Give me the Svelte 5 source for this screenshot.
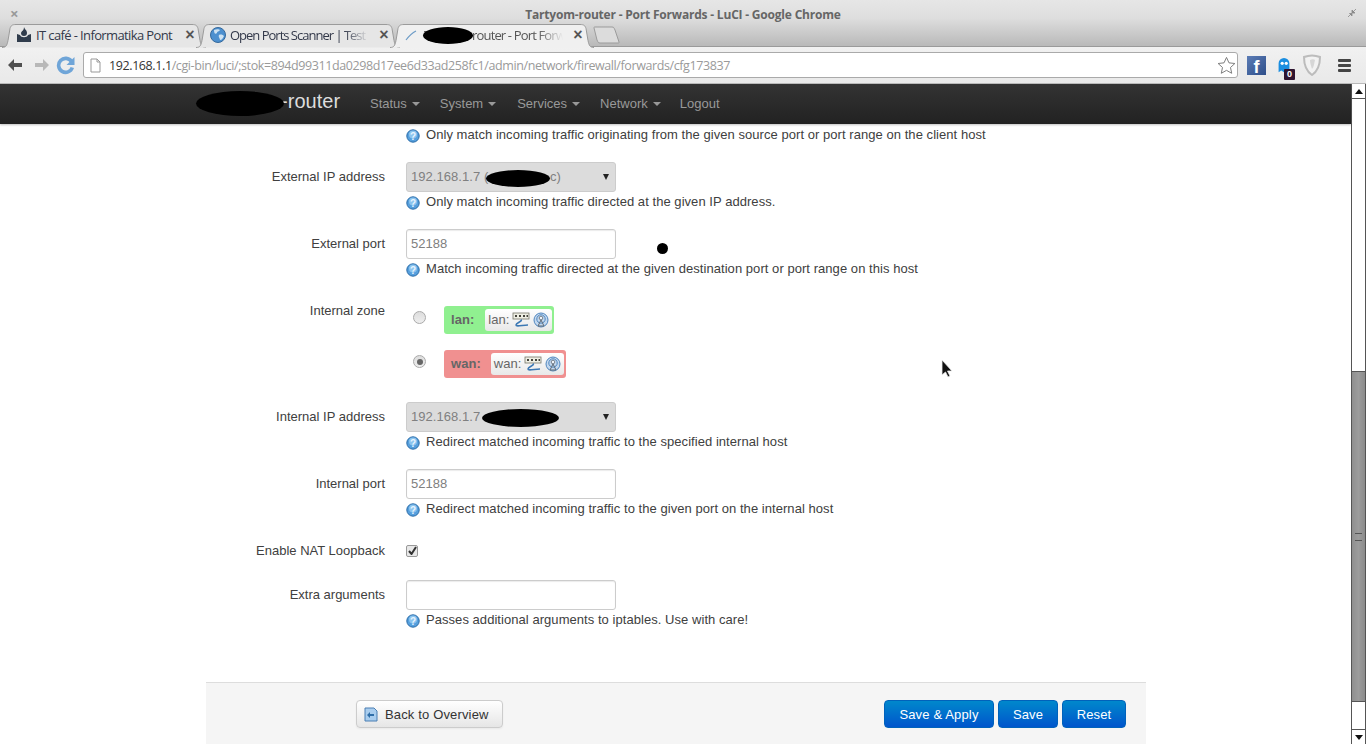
<script>
	const tabs = [
		{ title: 'IT café - Informatika Pont', icon: 'flame' },
		{ title: 'Open Ports Scanner | Test', icon: 'globe' },
		{ title: 'Tartyom-router - Port Forw', icon: 'luci', active: true }
	];
	const nav = ['Status', 'System', 'Services', 'Network'];
</script>

{#snippet help(text)}
	<div class="help">
		<svg class="qmark" width="14" height="14" viewBox="0 0 14 14">
			<circle cx="7" cy="7" r="6.2" fill="#559fdd" stroke="#2b6ca8" />
			<circle cx="7" cy="5.500" r="4" fill="#8cc4ee" />
			<text x="7" y="10.6" text-anchor="middle" class="qm">?</text>
		</svg>
		<span>{text}</span>
	</div>
{/snippet}

{#snippet netIcons()}
	<svg class="net" width="18" height="16" viewBox="0 0 18 16">
		<rect x="1" y="1" width="16" height="6" fill="#efefe4" stroke="#77776a" stroke-width="0.8" />
		<path d="M3 3h2v2H3zM7 3h2v2H7zM11 3h2v2h-2zM14.5 3h1.5v2h-1.5z" fill="#44443c" />
		<path d="M9 7.5c2 2-5 3-5 5.5 0 2 7 0 12 0" fill="none" stroke="#3c78b4" stroke-width="1.6" />
	</svg>
	<svg class="net" width="16" height="16" viewBox="0 0 16 16">
		<circle cx="8" cy="8" r="7" fill="#c3d8ee" stroke="#4f86bf" />
		<circle cx="8" cy="7" r="4.2" fill="none" stroke="#4f86bf" />
		<circle cx="8" cy="6" r="1.8" fill="#eef4fa" stroke="#5f6a75" stroke-width="0.8" />
		<path d="M8 8l-3 6h6z" fill="none" stroke="#5f6a75" />
	</svg>
{/snippet}

<div class="chrome">
	<div class="titlebar">
		<span class="close">×</span>
		<span class="wintitle">Tartyom-router - Port Forwards - LuCI - Google Chrome</span>
		<svg class="restore" width="10" height="10" viewBox="0 0 10 10">
			<path d="M1 9l3-3M2.5 5.5h2.5v2.500zM9 1L6 4M5 2v3h3z" fill="#8a8a8a" stroke="#8a8a8a" stroke-width="0.8" />
		</svg>
	</div>
	<div class="tabstrip">
		{#each tabs as tab}
			<div class="tab" class:active={tab.active}>
				<svg class="tabshape" width="204" height="25" viewBox="0 0 204 25">
					<path
						d="M0 24.500c4 0 5-2 6-7l2-12c1-3 2-4 6-4h176c4 0 5 1 6 4l2 12c1 5 2 7 6 7"
						fill={tab.active ? '#f0f0f0' : '#e6e6e6'}
						stroke="#9b9b9b"
					/>
				</svg>
				{#if tab.icon === 'flame'}
					<svg class="favicon" width="16" height="16" viewBox="0 0 16 16">
						<path d="M1 7l3 1c1 3 7 3 8 0l3-1v8H1z" fill="#303c4c" />
						<path d="M8 0c1 3 3 3 3 6 0 2-1 3-3 3S5 8 5 6c0-1 1-1 1-2 1 0 2-2 2-4z" fill="#303c4c" />
					</svg>
				{:else if tab.icon === 'globe'}
					<svg class="favicon" width="16" height="16" viewBox="0 0 16 16">
						<circle cx="8" cy="8" r="7.500" fill="#4d90cf" stroke="#35699c" />
						<path d="M4 3c2-1 5-1 6 0-1 2-3 1-3 3-2 2-3 0-3-3zM9 8c2-1 4 0 5 1-1 2-2 4-4 4 0-2-2-3-1-5z" fill="#cfe3f2" />
					</svg>
				{:else}
					<svg class="favicon" width="16" height="16" viewBox="0 0 16 16">
						<path d="M2 13c3-4 6-7 10-9" fill="none" stroke="#6d9cc7" stroke-width="1.200" />
					</svg>
				{/if}
				<span class="tabtitle" class:fade={tab.icon !== 'flame'}>{tab.title}</span>
				<span class="tabclose">×</span>
				{#if tab.active}
					<span class="blot blot-tab"></span>
				{/if}
			</div>
		{/each}
		<svg class="newtab" width="27" height="18" viewBox="0 0 27 18">
			<path d="M2 1h17c2 0 2 1 3 3l4 12c0 1 0 1-1 1H7c-2 0-2-1-3-3L1 2c0-1 0-1 1-1z" fill="#dcdcdc" stroke="#9b9b9b" />
		</svg>
	</div>
	<div class="toolbar">
		<svg class="navicon" width="16" height="16" viewBox="0 0 16 16">
			<path d="M1 8l6-6v4h8v4H7v4z" fill="#505050" />
		</svg>
		<svg class="navicon fwd" width="16" height="16" viewBox="0 0 16 16">
			<path d="M15 8L9 2v4H1v4h8v4z" fill="#b8b8b8" />
		</svg>
		<svg class="navicon reload" width="20" height="20" viewBox="0 0 20 20">
			<path d="M15.500 6.500a7 7 0 1 0 .8 6" fill="none" stroke="#6fa5d8" stroke-width="3.600" />
			<path d="M18.500 2v8h-8z" fill="#6fa5d8" />
		</svg>
		<div class="omnibox">
			<svg width="11" height="15" viewBox="0 0 11 15">
				<path d="M1 1h6l3 3v10H1z" fill="#fff" stroke="#999" />
				<path d="M7 1v3h3" fill="none" stroke="#999" />
			</svg>
			<span class="url"><span class="host">192.168.1.1</span>/cgi-bin/luci/;stok=894d99311da0298d17ee6d33ad258fc1/admin/network/firewall/forwards/cfg173837</span>
			<svg class="star" width="19" height="19" viewBox="0 0 20 20">
				<path d="M10 1.500l2.600 5.700 6.200.7-4.600 4.200 1.300 6.100L10 15.100l-5.500 3.100 1.300-6.100L1.200 7.900l6.200-.7z" fill="#fff" stroke="#777" />
			</svg>
		</div>
		<div class="fb">f</div>
		<div class="ghost">
			<svg width="14" height="18" viewBox="0 0 14 20">
				<path d="M1 17V7a6 6 0 0 1 12 0v9l-3-2-3 3-3-2z" fill="#1b8ee0" />
				<circle cx="5" cy="7" r="1.800" fill="#fff" />
				<circle cx="9.500" cy="7" r="1.800" fill="#fff" />
			</svg>
			<span class="badge">0</span>
		</div>
		<svg class="shield" width="20" height="22" viewBox="0 0 20 22">
			<path d="M2 3c5-2 11-2 16 0 0 8-2 14-8 18C4 17 2 11 2 3z" fill="#f2f2f2" stroke="#bcbcbc" stroke-width="2" />
			<path d="M8 6c2-1 4-1 5 0-1 4-1 7-3 9-1-3-2-6-2-9z" fill="#d6d6d6" />
		</svg>
		<div class="menu"><i></i><i></i><i></i></div>
	</div>
</div>

<div class="viewport">
	<div class="page">
		<header class="navbar">
			<div class="brand">
				<span class="blot blot-brand"></span>-router
			</div>
			<nav>
				{#each nav as item}
					<span class="navitem">{item}<i class="caret"></i></span>
				{/each}
				<span class="navitem logout">Logout</span>
			</nav>
		</header>

		<main class="form">
			<div class="row first">
				<div class="label"></div>
				<div class="field">
					{@render help('Only match incoming traffic originating from the given source port or port range on the client host')}
				</div>
			</div>

			<div class="row">
				<div class="label">External IP address</div>
				<div class="field">
					<div class="select">
						192.168.1.7 (<span class="blot blot-a"></span><span class="tail">c)</span>
						<i class="arrow"></i>
					</div>
					{@render help('Only match incoming traffic directed at the given IP address.')}
				</div>
			</div>

			<div class="row">
				<div class="label">External port</div>
				<div class="field">
					<div class="input">52188</div>
					{@render help('Match incoming traffic directed at the given destination port or port range on this host')}
					<span class="dot"></span>
				</div>
			</div>

			<div class="row zone">
				<div class="label">Internal zone</div>
				<div class="field">
					<div class="zonerow">
						<span class="radio"></span>
						<div class="chip lan">
							<b>lan:</b>
							<span class="chipin">lan: {@render netIcons()}</span>
						</div>
					</div>
					<div class="zonerow">
						<span class="radio on"></span>
						<div class="chip wan">
							<b>wan:</b>
							<span class="chipin">wan: {@render netIcons()}</span>
						</div>
					</div>
				</div>
			</div>

			<div class="row">
				<div class="label">Internal IP address</div>
				<div class="field">
					<div class="select">
						192.168.1.7 <span class="blot blot-b"></span>
						<i class="arrow"></i>
					</div>
					{@render help('Redirect matched incoming traffic to the specified internal host')}
				</div>
			</div>

			<div class="row">
				<div class="label">Internal port</div>
				<div class="field">
					<div class="input">52188</div>
					{@render help('Redirect matched incoming traffic to the given port on the internal host')}
				</div>
			</div>

			<div class="row nat">
				<div class="label">Enable NAT Loopback</div>
				<div class="field">
					<span class="check">
						<svg width="9" height="9" viewBox="0 0 9 9"><path d="M1 5l2.500 3L8 1" fill="none" stroke="#333" stroke-width="2" /></svg>
					</span>
				</div>
			</div>

			<div class="row">
				<div class="label">Extra arguments</div>
				<div class="field">
					<div class="input"></div>
					{@render help('Passes additional arguments to iptables. Use with care!')}
				</div>
			</div>
		</main>

		<footer class="actions">
			<button class="back">
				<svg width="14" height="15" viewBox="0 0 14 15">
					<path d="M1 1h9l3 3v10H1z" fill="#a9cdee" stroke="#4a7fb3" />
					<path d="M3 8l3-3v2h4v2H6v2z" fill="#2f6ea8" />
				</svg>
				Back to Overview
			</button>
			<div class="primary">
				<button class="blue apply">Save &amp; Apply</button>
				<button class="blue save">Save</button>
				<button class="blue reset">Reset</button>
			</div>
		</footer>
		<svg class="cursor" width="12" height="19" viewBox="0 0 12 19">
			<path d="M1 1v15l3.500-3 2.500 5 2-1-2.500-5H11z" fill="#111" stroke="#eee" stroke-width="0.800" />
		</svg>
	</div>

	<div class="scrollbar">
		<div class="sbtn"><i class="up"></i></div>
		<div class="track"></div>
		<div class="thumb"><span class="grip"></span></div>
		<div class="track small"></div>
		<div class="sbtn"><i class="down"></i></div>
	</div>
</div>

<style>
	:global(body) {
		margin: 0;
		overflow: hidden;
		background: #fff;
		font-family: 'Liberation Sans', Arial, sans-serif;
	}

	.chrome {
		height: 84px;
		background: linear-gradient(#e6e6e6, #dedede 18px, #b9b9b9 46px);
		font-family: 'Open Sans', sans-serif;
		display: flex;
		flex-direction: column;
	}

	.titlebar {
		height: 23px;
		position: relative;
		display: flex;
		align-items: center;
		justify-content: center;
		padding-top: 6px;
		box-sizing: border-box;
		color: #666;
	}

	.wintitle {
		font-size: 12px;
		font-weight: 700;
		letter-spacing: -0.2px;
	}

	.close {
		position: absolute;
		left: 10px;
		top: 3px;
		font-size: 15px;
		font-weight: 700;
		color: #999;
	}

	.restore {
		position: absolute;
		right: 9px;
		top: 8px;
	}

	.tabstrip {
		height: 24px;
		display: flex;
		padding-left: 3px;
		align-items: flex-end;
		flex: none;
		position: relative;
		z-index: 2;
		margin-bottom: -1px;
	}

	.tab {
		width: 194px;
		height: 24px;
		flex: none;
		position: relative;
		display: flex;
		align-items: center;
		padding-left: 13px;
		box-sizing: border-box;
		font-size: 13px;
		color: #33394a;
	}

	.tab.active {
		color: #555;
	}

	.tabshape {
		position: absolute;
		left: -1px;
		top: 0;
	}

	.favicon {
		position: relative;
		flex: none;
		margin-right: 4px;
	}

	.tabtitle {
		position: relative;
		white-space: nowrap;
		overflow: hidden;
		min-width: 0;
		flex: 1;
		letter-spacing: -0.62px;
	}

	.tab:nth-child(2) .tabtitle {
		letter-spacing: -1px;
	}

	.tab.active .tabtitle {
		letter-spacing: -0.85px;
	}

	.tabtitle.fade {
		-webkit-mask-image: linear-gradient(to right, #000 80%, transparent 98%);
		mask-image: linear-gradient(to right, #000 80%, transparent 98%);
	}

	.tabclose {
		position: relative;
		width: 24px;
		flex: none;
		margin-right: -5px;
		text-align: center;
		font-size: 16px;
		font-weight: 700;
		color: #555;
		font-family: 'Liberation Sans', sans-serif;
	}

	.blot-tab {
		position: absolute;
		left: 32px;
		top: 4px;
		width: 50px;
		height: 17px;
	}

	.newtab {
		margin-left: 8px;
		margin-bottom: 3px;
		flex: none;
	}

	.toolbar {
		height: 37px;
		flex: none;
		background: linear-gradient(#f1f1f1, #e9e9e9);
		border-top: 1px solid #9a9a9a;
		box-sizing: border-box;
		display: flex;
		align-items: center;
		padding: 0 0 0 7px;
		position: relative;
	}

	.navicon {
		flex: none;
		margin-right: 11px;
	}

	.navicon.fwd {
		margin-right: 6px;
	}

	.navicon.reload {
		margin: 0 7px 0 0;
	}

	.omnibox {
		width: 1155px;
		height: 26px;
		flex: none;
		box-sizing: border-box;
		background: #fff;
		border: 1px solid #aaa;
		border-radius: 3px;
		display: flex;
		align-items: center;
		padding: 0 1px 0 6px;
		gap: 8px;
		font-size: 12.500px;
		color: #9a9a9a;
	}

	.url {
		flex: 1;
		white-space: nowrap;
		letter-spacing: -0.4px;
	}

	.host {
		color: #333;
	}

	.fb {
		width: 19px;
		height: 19px;
		flex: none;
		margin-left: 9px;
		background: linear-gradient(135deg, #5b7cb5, #2f4f8a);
		color: #fff;
		font: 700 18px/22px 'Liberation Sans', sans-serif;
		text-align: center;
	}

	.ghost {
		position: relative;
		width: 20px;
		height: 24px;
		margin-left: 10px;
		flex: none;
	}

	.ghost svg {
		position: absolute;
		left: 1px;
		top: 4px;
	}

	.badge {
		position: absolute;
		right: 1px;
		bottom: -3px;
		width: 11px;
		height: 11px;
		background: #2f1430;
		border-radius: 1px;
		color: #fff;
		font: 700 9px/11px 'Liberation Sans', sans-serif;
		text-align: center;
	}

	.shield {
		flex: none;
		margin-left: 6px;
	}

	.menu {
		flex: none;
		margin-left: 16px;
		width: 13px;
		display: flex;
		flex-direction: column;
		gap: 2px;
	}

	.menu i {
		height: 3px;
		background: #444;
		border-radius: 1px;
	}

	.viewport {
		display: flex;
		height: 660px;
		overflow: hidden;
	}

	.page {
		width: 1351px;
		flex: none;
		position: relative;
		font-size: 13px;
		letter-spacing: 0.05px;
		color: #404040;
		display: flex;
		flex-direction: column;
	}

	.navbar {
		height: 40px;
		flex: none;
		background: linear-gradient(#333, #222);
		display: flex;
		align-items: center;
		box-shadow: 0 1px 2px rgba(0, 0, 0, 0.25);
		padding-left: 281px;
		position: relative;
	}

	.brand {
		font-size: 20px;
		color: #ddd;
		width: 89px;
		position: relative;
		margin-top: -6px;
	}

	.blot {
		display: inline-block;
		background: #000;
		border-radius: 50%;
	}

	.blot-brand {
		position: absolute;
		left: -85px;
		top: 1px;
		width: 88px;
		height: 25px;
	}

	nav {
		display: flex;
		gap: 20px;
		color: #999;
		margin-top: -2px;
		letter-spacing: 0;
	}

	.navitem:nth-child(3) {
		margin-left: 1px;
	}

	.logout {
		margin-left: -1px;
	}

	.caret {
		display: inline-block;
		border: 4px solid transparent;
		border-top-color: #999;
		border-bottom-width: 0;
		margin-left: 5px;
		vertical-align: 2px;
	}

	.form {
		flex: 1;
		padding-left: 206px;
	}

	.row {
		display: grid;
		grid-template-columns: 179px 1fr;
		column-gap: 21px;
		width: 940px;
		margin-bottom: 19px;
	}

	.row.first {
		padding-top: 1px;
		margin-bottom: 19px;
	}

	.row.zone {
		margin-bottom: 24px;
	}

	.row.nat {
		margin-bottom: 16px;
		align-items: center;
		height: 28px;
	}

	.label {
		text-align: right;
		line-height: 30px;
		letter-spacing: 0;
	}

	.field {
		position: relative;
	}

	.help {
		height: 17px;
		margin-top: 1px;
		display: flex;
		align-items: center;
		gap: 6px;
		line-height: 17px;
	}

	.qmark {
		flex: none;
		margin-top: 2px;
	}

	.qm {
		font: 700 10px 'Liberation Sans', sans-serif;
		fill: #e8f4ff;
	}

	.select,
	.input {
		width: 210px;
		height: 30px;
		box-sizing: border-box;
		border: 1px solid #ccc;
		border-radius: 3px;
		padding: 0 4px;
		line-height: 28px;
		color: #808080;
		position: relative;
		white-space: nowrap;
	}

	.input {
		background: #fff;
		box-shadow: inset 0 1px 1px rgba(0, 0, 0, 0.08);
	}

	.select {
		background: #dcdcdc;
	}

	.blot-a {
		position: absolute;
		left: 79px;
		top: 7px;
		width: 64px;
		height: 17px;
	}

	.blot-b {
		position: absolute;
		left: 75px;
		top: 6px;
		width: 77px;
		height: 18px;
	}

	.tail {
		position: absolute;
		left: 143px;
	}

	.arrow {
		position: absolute;
		right: 6px;
		top: 11px;
		border: 3.500px solid transparent;
		border-top: 6px solid #222;
		border-bottom: 0;
	}

	.dot {
		position: absolute;
		left: 251px;
		top: 14px;
		width: 11px;
		height: 11px;
		background: #000;
		border-radius: 50%;
	}

	.zonerow {
		display: flex;
		align-items: flex-start;
		height: 28px;
		margin-bottom: 16px;
		padding-left: 7px;
		gap: 18px;
	}

	.zonerow:first-child {
		margin-top: 10px;
	}

	.zonerow:last-child {
		margin-bottom: 0;
	}

	.radio {
		width: 11px;
		height: 11px;
		margin-top: 5px;
		flex: none;
		border: 1px solid #aaa;
		border-radius: 50%;
		background: linear-gradient(#ddd, #eee);
		position: relative;
	}

	.radio.on::after {
		content: '';
		position: absolute;
		left: 2.500px;
		top: 2.500px;
		width: 6px;
		height: 6px;
		border-radius: 50%;
		background: #666;
	}

	.chip {
		height: 28px;
		box-sizing: border-box;
		border-radius: 3px;
		display: flex;
		align-items: center;
		padding: 0 2px 0 7px;
		gap: 12px;
		color: #666;
	}

	.chip b {
		margin-top: -2px;
	}

	.chip.lan {
		background: #90f090;
		gap: 11px;
	}

	.chip.wan {
		background: #f09090;
		gap: 10px;
	}

	.chipin {
		height: 22px;
		box-sizing: border-box;
		padding: 0 3px 2px;
		display: flex;
		align-items: center;
		gap: 3px;
		background: linear-gradient(#fff, #e8e8e8);
		border-radius: 3px;
		color: #666;
	}

	.net {
		margin-top: 2px;
	}

	.check {
		width: 10px;
		height: 10px;
		margin-top: -1px;
		border: 1px solid #999;
		border-radius: 2px;
		display: grid;
		place-items: center;
		background: #e8e8e8;
	}

	.actions {
		height: 62px;
		flex: none;
		box-sizing: border-box;
		width: 940px;
		margin-left: 206px;
		background: #f5f5f5;
		border-top: 1px solid #ddd;
		display: flex;
		align-items: flex-start;
		justify-content: space-between;
		padding: 17px 20px 0 150px;
	}

	button {
		height: 28px;
		font: 13px 'Liberation Sans', sans-serif;
		letter-spacing: 0.15px;
		border-radius: 4px;
		padding: 0;
		margin: 0;
	}

	.back {
		width: 147px;
		background: linear-gradient(#fff, #e6e6e6);
		border: 1px solid #ccc;
		color: #333;
		display: flex;
		align-items: center;
		padding-left: 7px;
		gap: 7px;
		box-shadow: 0 1px 2px rgba(0, 0, 0, 0.05);
	}

	.primary {
		display: flex;
		gap: 4px;
	}

	.blue {
		background: linear-gradient(#0088cc, #0055cc);
		border: 1px solid #0062bb;
		color: #fff;
	}

	.apply {
		width: 110px;
	}

	.save {
		width: 60px;
	}

	.reset {
		width: 64px;
	}

	.cursor {
		position: absolute;
		left: 941px;
		top: 275px;
	}

	.scrollbar {
		width: 15px;
		flex: none;
		box-sizing: border-box;
		border-left: 1px solid #555;
		border-right: 1px solid #555;
		display: flex;
		flex-direction: column;
		background: #fff;
	}

	.sbtn {
		height: 14px;
		flex: none;
		display: grid;
		place-items: center;
		border-bottom: 1px solid #555;
	}

	.sbtn:last-child {
		border-bottom: 0;
		border-top: 1px solid #555;
	}

	.up,
	.down {
		border: 4px solid transparent;
		border-top: 0;
		border-bottom: 5px solid #111;
	}

	.down {
		border-bottom: 0;
		border-top: 5px solid #111;
	}

	.track {
		height: 272px;
		flex: none;
	}

	.track.small {
		flex: 1;
		height: auto;
	}

	.thumb {
		height: 329px;
		flex: none;
		background: linear-gradient(to right, #8f8f8f, #9c9c9c 50%, #8c8c8c);
		border-top: 1px solid #555;
		border-bottom: 1px solid #555;
		display: grid;
		place-items: center;
	}

	.grip {
		width: 7px;
		height: 6px;
		border-top: 1px solid #555;
		border-bottom: 1px solid #555;
	}
</style>
